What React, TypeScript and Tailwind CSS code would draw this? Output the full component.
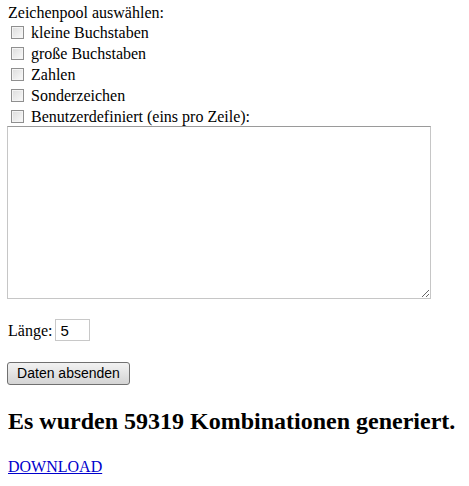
export default function App() {
  const pools = ['kleine Buchstaben', 'große Buchstaben', 'Zahlen', 'Sonderzeichen', 'Benutzerdefiniert (eins pro Zeile):'];

  return (
    <div className="bg-white min-h-[486px] px-2 pt-[3px] text-[16px] leading-[19px] text-black" style={{ fontFamily: '"Liberation Serif", "Times New Roman", serif' }}>
      <form>
        <div>Zeichenpool auswählen:</div>
        <div className="flex flex-col">
          {pools.map((p) => (
            <label key={p} className="flex items-center h-[21px]">
              <span className="ml-[3px] mr-[7px] w-[13px] h-[13px] border border-[#8f8f8f] bg-gradient-to-br from-[#dcdcdc] to-[#fafafa] shadow-[inset_0_0_0_1px_#f4f4f4]" />
              {p}
            </label>
          ))}
        </div>
        <textarea className="-mt-[1px] -ml-[1px] block w-[424px] h-[173px] border border-[#c6c6c6] border-t-[#9a9a9a] resize-y outline-none" />
        <div className="mt-[20px] flex items-center h-[22px]">
          <span>Länge:</span>
          <input defaultValue="5" className="ml-[3px] w-[35px] h-[22px] border border-[#c8c8c8] px-[4px] text-[15px] outline-none" style={{ fontFamily: '"Liberation Sans", Arial, sans-serif' }} />
        </div>
        <button type="button" className="mt-[21px] -ml-[1px] block w-[123px] h-[23px] border border-[#707070] rounded-[3px] bg-gradient-to-b from-[#f2f2f2] to-[#d4d4d4] text-[14px] text-black" style={{ fontFamily: '"Liberation Sans", Arial, sans-serif' }}>
          Daten absenden
        </button>
      </form>
      <h2 className="mt-[22px] text-[24px] leading-[28px] font-bold">Es wurden 59319 Kombinationen generiert.</h2>
      <a href="#" className="block mt-[22px] text-[#0000cc] underline">DOWNLOAD</a>
    </div>
  );
}
